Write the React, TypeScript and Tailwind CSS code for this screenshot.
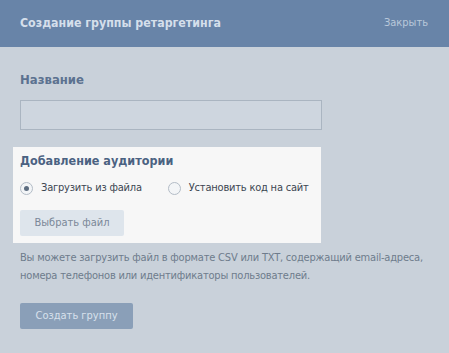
import { useState } from "react";

function Radio({ checked, label, onClick }: { checked: boolean; label: string; onClick: () => void }) {
    return (
        <label className="flex flex-row items-center gap-[8px] cursor-pointer" onClick={onClick}>
            <span className="w-[13px] h-[13px] rounded-full border border-[#b3bcc6] bg-[#f3f5f7] flex items-center justify-center">
                {checked && <span className="w-[5px] h-[5px] rounded-full bg-[#5d6d80]"></span>}
            </span>
            <span className="text-[#3c4652] whitespace-nowrap tracking-[-0.2px]">{label}</span>
        </label>
    );
}

function App() {
    const [source, setSource] = useState("file");

    return (
        <div className="w-[449px] h-[353px] bg-[#c9d1da] text-[11px] font-stretch-condensed font-['DejaVu_Sans',sans-serif]">
            <div className="h-[47px] bg-[#6884a8] flex flex-row items-center justify-between px-[20px]">
                <span className="text-[12.3px] font-bold text-[#d5dfeb]">Создание группы ретаргетинга</span>
                <span className="text-[#b9c8da] pr-[1px]">Закрыть</span>
            </div>
            <div className="pt-[25px] px-[13px]">
                <div className="px-[7px]">
                    <div className="text-[13px] font-bold text-[#5c7290] leading-[16px]">Название</div>
                    <input className="mt-[12px] w-[302px] h-[30px] bg-[#ced6df] border border-[#aab5c1] outline-none" />
                </div>
                <div className="mt-[17px] w-[308px] bg-[#f7f7f7] px-[7px] pt-[4px] pb-[7px]">
                    <div className="text-[12.5px] font-bold text-[#4b6282] leading-[20px]">Добавление аудитории</div>
                    <div className="flex flex-row gap-[26px] mt-[9px] leading-[16px]">
                        <Radio checked={source === "file"} label="Загрузить из файла" onClick={() => setSource("file")} />
                        <Radio checked={source === "site"} label="Установить код на сайт" onClick={() => setSource("site")} />
                    </div>
                    <button className="mt-[14px] w-[104px] h-[26px] rounded-[2px] bg-[#dee5ec] text-[#7b8898]">Выбрать файл</button>
                </div>
                <div className="px-[7px] mt-[6px] text-[#6e7c8c] leading-[18px] tracking-[-0.2px]">
                    Вы можете загрузить файл в формате CSV или TXT, содержащий email-адреса, номера телефонов или идентификаторы пользователей.
                </div>
                <div className="px-[7px] mt-[18px]">
                    <button className="w-[113px] h-[26px] rounded-[2px] bg-[#8a9fb8] text-[#d8e1ec]">Создать группу</button>
                </div>
            </div>
        </div>
    );
}

export default App;
